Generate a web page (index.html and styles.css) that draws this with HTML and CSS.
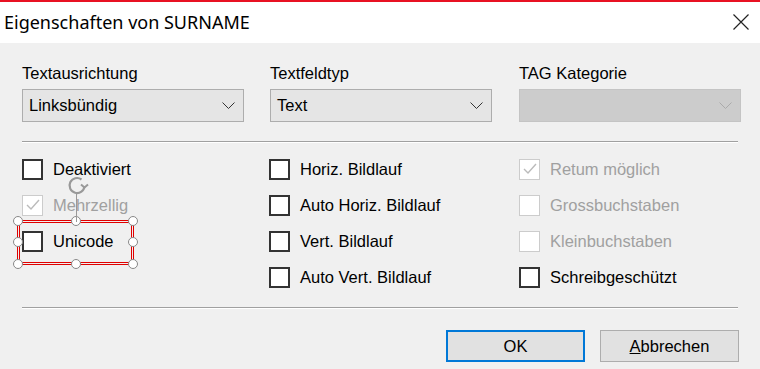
FILE: index.html
```html
<!DOCTYPE html>
<html lang="de">
<head>
    <meta charset="UTF-8">
    <title>Eigenschaften von SURNAME</title>
    <link rel="stylesheet" href="styles.css">
</head>
<body>
    <div class="dialog">
        <div class="titlebar">
            <div class="title">Eigenschaften von SURNAME</div>
            <svg class="close" width="16" height="16" viewBox="0 0 16 16">
                <path d="M0.5 0.5 L15.5 15.5 M15.5 0.5 L0.5 15.5" stroke="#222" stroke-width="1.2" fill="none"/>
            </svg>
        </div>

        <div class="content">
            <div class="fields">
                <div class="field">
                    <label>Textausrichtung</label>
                    <div class="combo">
                        <span>Linksbündig</span>
                        <svg class="arrow" width="13" height="8" viewBox="0 0 13 8"><path d="M0.5 0.5 L6.5 6.5 L12.5 0.5" stroke="#333" fill="none"/></svg>
                    </div>
                </div>
                <div class="field">
                    <label>Textfeldtyp</label>
                    <div class="combo">
                        <span>Text</span>
                        <svg class="arrow" width="13" height="8" viewBox="0 0 13 8"><path d="M0.5 0.5 L6.5 6.5 L12.5 0.5" stroke="#333" fill="none"/></svg>
                    </div>
                </div>
                <div class="field">
                    <label>TAG Kategorie</label>
                    <div class="combo disabled">
                        <span></span>
                        <svg class="arrow" width="13" height="8" viewBox="0 0 13 8"><path d="M0.5 0.5 L6.5 6.5 L12.5 0.5" stroke="#aaa" fill="none"/></svg>
                    </div>
                </div>
            </div>

            <div class="separator"></div>

            <div class="checks">
                <div class="check"><span class="box"></span>Deaktiviert</div>
                <div class="check"><span class="box"></span>Horiz. Bildlauf</div>
                <div class="check disabled"><span class="box checked"><svg width="16" height="16" viewBox="0 0 16 16"><path d="M2 8 L6 12 L14 3" stroke="#bbb" stroke-width="1.4" fill="none"/></svg></span>Retum möglich</div>

                <div class="check disabled"><span class="box checked"><svg width="16" height="16" viewBox="0 0 16 16"><path d="M2 8 L6 12 L14 3" stroke="#bbb" stroke-width="1.4" fill="none"/></svg></span>Mehrzellig</div>
                <div class="check"><span class="box"></span>Auto Horiz. Bildlauf</div>
                <div class="check disabled"><span class="box"></span>Grossbuchstaben</div>

                <div class="check selected">
                    <span class="box"></span>Unicode
                    <div class="frame">
                        <span class="handle h-tl"></span>
                        <span class="handle h-tc"></span>
                        <span class="handle h-tr"></span>
                        <span class="handle h-ml"></span>
                        <span class="handle h-mr"></span>
                        <span class="handle h-bl"></span>
                        <span class="handle h-bc"></span>
                        <span class="handle h-br"></span>
                    </div>
                </div>
                <div class="check"><span class="box"></span>Vert. Bildlauf</div>
                <div class="check disabled"><span class="box"></span>Kleinbuchstaben</div>

                <div class="check empty"></div>
                <div class="check"><span class="box"></span>Auto Vert. Bildlauf</div>
                <div class="check"><span class="box"></span>Schreibgeschützt</div>
            </div>

            <div class="separator bottom"></div>

            <div class="buttons">
                <button class="btn default">OK</button>
                <button class="btn"><u>A</u>bbrechen</button>
            </div>
        </div>

        <!-- rotate handle of the selected control -->
        <div class="rotate">
            <svg width="26" height="46" viewBox="0 0 26 46">
                <path d="M16.5 3.5 A7.5 7.5 0 1 0 19.5 10" stroke="#999" stroke-width="2.2" fill="none"/>
                <path d="M16 8.5 L19.5 11.5 L23 8.5" stroke="#999" stroke-width="2" fill="none"/>
                <line x1="11.5" y1="18" x2="11.5" y2="46" stroke="#999" stroke-width="1"/>
            </svg>
        </div>
    </div>
</body>
</html>
```

FILE: styles.css
```css
* {
    margin: 0;
    padding: 0;
    box-sizing: border-box;
}

body {
    width: 760px;
    height: 369px;
    overflow: hidden;
    background-color: #f0f0f0;
    font-family: "Liberation Sans", Arial, sans-serif;
    font-size: 16.5px;
    color: #000;
}

.dialog {
    position: relative;
    height: 369px;
    border-top: 2px solid #e81123;
}

.titlebar {
    height: 41px;
    background-color: #fff;
    display: flex;
    align-items: center;
    justify-content: space-between;
    padding: 0 11px 0 4px;
}

.title {
    font-family: "Noto Sans", sans-serif;
    font-size: 18px;
    color: #000;
    margin-top: -2px;
}

.close {
    margin-top: -2px;
}

.content {
    padding: 19px 22px 0 22px;
}

.fields {
    display: grid;
    grid-template-columns: 248px 249px 222px;
}

.field label {
    display: block;
    height: 27px;
    line-height: 22px;
}

.combo {
    width: 222px;
    height: 33px;
    background-color: #e5e5e5;
    border: 1px solid #adadad;
    display: flex;
    align-items: center;
    justify-content: space-between;
    padding: 0 8px 0 6px;
}

.combo.disabled {
    background-color: #cccccc;
    border-color: #c4c4c4;
}

.separator {
    width: 716px;
    margin-top: 19px;
    border-top: 1px solid #a0a0a0;
    border-bottom: 1px solid #fff;
}

.separator.bottom {
    margin-top: 12px;
}

.checks {
    display: grid;
    grid-template-columns: 247px 250px 222px;
    grid-auto-rows: 36px;
    margin-top: 8px;
}

.check {
    display: flex;
    align-items: center;
    gap: 10px;
}

.check.disabled {
    color: #a0a0a0;
}

.box {
    width: 21px;
    height: 21px;
    border: 2px solid #333;
    background-color: #fff;
    display: flex;
    align-items: center;
    justify-content: center;
}

.check.disabled .box {
    border: 1px solid #cccccc;
}

.selected {
    position: relative;
}

.frame {
    position: absolute;
    left: -5px;
    top: -3px;
    width: 117px;
    height: 45px;
    border: 3px double #e00000;
}

.handle {
    position: absolute;
    width: 10px;
    height: 10px;
    border-radius: 50%;
    background-color: #fff;
    border: 1px solid #888;
}

.h-tl { left: -7px; top: -7px; }
.h-tc { left: 51px; top: -7px; }
.h-tr { right: -7px; top: -7px; }
.h-ml { left: -7px; top: 14px; }
.h-mr { right: -7px; top: 14px; }
.h-bl { left: -7px; bottom: -7px; }
.h-bc { left: 51px; bottom: -7px; }
.h-br { right: -7px; bottom: -7px; }

.rotate {
    position: absolute;
    left: 65px;
    top: 174px;
}

.buttons {
    display: flex;
    justify-content: flex-end;
    gap: 15px;
    margin-top: 21px;
    width: 717px;
}

.btn {
    width: 139px;
    height: 32px;
    background-color: #e1e1e1;
    border: 1px solid #adadad;
    font-family: "Liberation Sans", Arial, sans-serif;
    font-size: 16.5px;
    color: #000;
}

.btn.default {
    border: 2px solid #0078d7;
}
```
